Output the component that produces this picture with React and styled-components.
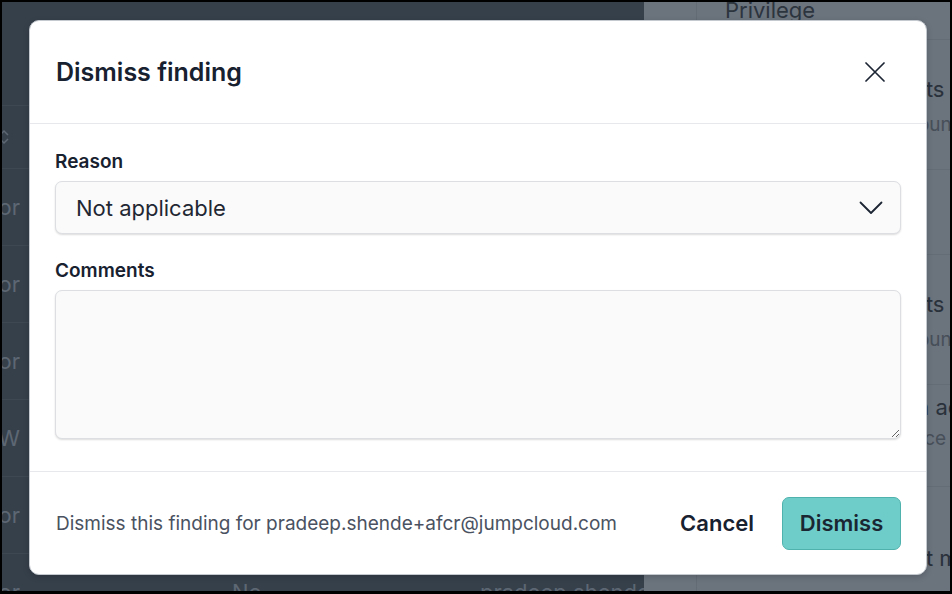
import styled, { createGlobalStyle } from "styled-components";

const GlobalStyle = createGlobalStyle`
  html, body {
    margin: 0;
    padding: 0;
    background: #000;
  }
  body {
    font-family: Inter, "Noto Sans", sans-serif;
    -webkit-font-smoothing: antialiased;
  }
  * {
    box-sizing: border-box;
  }
`;

const leftRows = [
  { name: "Vendor", admin: "No", user: "pradeep.shende" },
  { name: "Vendor", admin: "No", user: "pradeep.shende" },
  { name: "Vendor", admin: "No", user: "pradeep.shende" },
  { name: "Vendor W", admin: "No", user: "pradeep.shende" },
  { name: "Vendor", admin: "No", user: "pradeep.shende" },
  { name: "Vendor", admin: "No", user: "pradeep.shende" },
];

// h = row height, pad = space above the title, shift = extra indent
const rightRows = [
  { h: 130, pad: 36, shift: 10, title: "Local user accounts", sub: "Built-in machine account" },
  { h: 85 },
  { h: 130, pad: 36, shift: 10, title: "Local user accounts", sub: "Built-in machine account" },
  { h: 102, pad: 9, gap: 6, shift: 6, title: "Unrestricted admin access", sub: "Applies on every device" },
  { h: 110, pad: 58, shift: 10, title: "Local user account mapping" },
];

const App = () => {
  return (
    <>
      <GlobalStyle />
      <Frame>
        <TablePane>
          <Toolbar />
          <HeadRow>
            <NameCell>
              <SortIcon viewBox="0 0 12 18">
                <path d="M2 7 L6 3 L10 7" />
                <path d="M2 11 L6 15 L10 11" />
              </SortIcon>
            </NameCell>
          </HeadRow>
          {leftRows.map((row, i) => (
            <Row key={i}>
              <NameCell>
                <span>{row.name}</span>
              </NameCell>
              <Cell />
              <Cell>{row.admin}</Cell>
              <Cell>{row.user}</Cell>
            </Row>
          ))}
        </TablePane>

        <SidePane>
          <SideHead>
            <CheckCol />
            <SideHeadText>Privilege</SideHeadText>
          </SideHead>
          {rightRows.map((row, i) => (
            <SideRow key={i} $h={row.h}>
              <CheckCol />
              <SideCell $shift={row.shift} $pad={row.pad} $gap={row.gap}>
                {row.title && <SideTitle>{row.title}</SideTitle>}
                {row.sub && <SideSub>{row.sub}</SideSub>}
              </SideCell>
            </SideRow>
          ))}
        </SidePane>

        <Overlay>
          <Modal role="dialog" aria-labelledby="dismiss-title">
            <Header>
              <Title id="dismiss-title">Dismiss finding</Title>
              <CloseButton aria-label="Close">
                <svg width="20" height="20" viewBox="0 0 20 20">
                  <path
                    d="M1 1 L19 19 M19 1 L1 19"
                    stroke="#1c2533"
                    strokeWidth="1.7"
                    strokeLinecap="round"
                  />
                </svg>
              </CloseButton>
            </Header>

            <Body>
              <Field>
                <Label>Reason</Label>
                <SelectBox>
                  <span>Not applicable</span>
                  <svg width="24" height="14" viewBox="0 0 24 14">
                    <path
                      d="M1.5 1.5 L12 12 L22.5 1.5"
                      fill="none"
                      stroke="#1c2533"
                      strokeWidth="1.8"
                      strokeLinecap="round"
                      strokeLinejoin="round"
                    />
                  </svg>
                </SelectBox>
              </Field>
              <Field>
                <Label>Comments</Label>
                <TextArea />
              </Field>
            </Body>

            <Footer>
              <FooterNote>
                Dismiss this finding for pradeep.shende+afcr@jumpcloud.com
              </FooterNote>
              <GhostButton>Cancel</GhostButton>
              <PrimaryButton>Dismiss</PrimaryButton>
            </Footer>
          </Modal>
        </Overlay>
      </Frame>
    </>
  );
};

const Frame = styled.div`
  position: relative;
  width: 952px;
  height: 594px;
  border: 2px solid #000;
  border-bottom-width: 3px;
  overflow: hidden;
  display: flex;
`;

/* dimmed table behind the dialog */
const TablePane = styled.div`
  width: 642px;
  flex-shrink: 0;
  background: #36404b;
  display: flex;
  flex-direction: column;
`;

const Toolbar = styled.div`
  height: 103px;
  flex-shrink: 0;
`;

const HeadRow = styled.div`
  height: 63px;
  flex-shrink: 0;
  border-top: 1px solid #3e4853;
  display: flex;
  align-items: center;
`;

const Row = styled.div`
  height: 77px;
  flex-shrink: 0;
  border-top: 1px solid #3e4853;
  display: grid;
  grid-template-columns: 18px 188px 248px 1fr;
  align-items: center;
  color: #5d6773;
  font-size: 22px;
`;

const NameCell = styled.div`
  width: 18px;
  overflow: hidden;
  display: flex;
  justify-content: flex-end;
  white-space: nowrap;
`;

const SortIcon = styled.svg`
  flex-shrink: 0;
  width: 12px;
  height: 18px;
  margin-right: 10px;
  fill: none;
  stroke: #5d6773;
  stroke-width: 1.5;
`;

const Cell = styled.div`
  padding-left: 24px;
  white-space: nowrap;
  overflow: hidden;
`;

const SidePane = styled.div`
  flex: 1;
  background: #6b737d;
  display: flex;
  flex-direction: column;
`;

const SideHead = styled.div`
  height: 38px;
  flex-shrink: 0;
  display: flex;
  border-bottom: 1px solid #646c76;
`;

const CheckCol = styled.div`
  width: 53px;
  flex-shrink: 0;
  border-right: 1px solid #636b75;
`;

const SideHeadText = styled.div`
  padding-left: 28px;
  margin-top: -5px;
  font-size: 22px;
  line-height: 27px;
  color: #2c343e;
`;

const SideRow = styled.div`
  height: ${(p) => p.$h}px;
  flex-shrink: 0;
  display: flex;
  border-bottom: 1px solid #646c76;
`;

const SideCell = styled.div`
  flex: 1;
  padding-left: ${(p) => 28 + (p.$shift || 0)}px;
  padding-top: ${(p) => p.$pad || 0}px;
  display: flex;
  flex-direction: column;
  gap: ${(p) => p.$gap ?? 10}px;
  white-space: nowrap;
  overflow: hidden;
`;

const SideTitle = styled.div`
  font-size: 22px;
  line-height: 27px;
  color: #29313b;
`;

const SideSub = styled.div`
  font-size: 19px;
  line-height: 23px;
  color: #474f59;
`;

/* dialog */
const Overlay = styled.div`
  position: absolute;
  inset: 0;
  display: flex;
  align-items: flex-start;
  justify-content: flex-start;
  padding: 18px 0 0 27px;
`;

const Modal = styled.div`
  width: 898px;
  background: #fff;
  border: 1px solid #c4c9cf;
  border-radius: 10px;
  box-shadow: 0 2px 6px rgba(0, 0, 0, 0.18);
  display: flex;
  flex-direction: column;
  color: #17212f;
`;

const Header = styled.div`
  height: 103px;
  display: flex;
  align-items: center;
  justify-content: space-between;
  padding: 0 33px 0 26px;
  border-bottom: 1px solid #e6e8eb;
`;

const Title = styled.h2`
  margin: 0;
  font-size: 25px;
  line-height: 30px;
  font-weight: 600;
  color: #17212f;
`;

const CloseButton = styled.button`
  width: 36px;
  height: 36px;
  padding: 0;
  border: none;
  background: none;
  display: flex;
  align-items: center;
  justify-content: center;
  cursor: pointer;
`;

const Body = styled.div`
  padding: 26px 25px 32px 25px;
  display: flex;
  flex-direction: column;
  gap: 25px;
`;

const Field = styled.div`
  display: flex;
  flex-direction: column;
  gap: 7px;
`;

const Label = styled.label`
  font-size: 19px;
  line-height: 24px;
  font-weight: 600;
  color: #17212f;
`;

const SelectBox = styled.div`
  height: 53px;
  border: 1px solid #dcdee2;
  border-radius: 7px;
  background: #fafafa;
  box-shadow: 0 1px 2px rgba(0, 0, 0, 0.14);
  display: flex;
  align-items: center;
  justify-content: space-between;
  padding: 0 17px 0 20px;
  font-size: 22px;
  color: #1f2733;
  cursor: pointer;
`;

const TextArea = styled.textarea`
  height: 149px;
  border: 1px solid #dcdee2;
  border-radius: 7px;
  background: #fafafa;
  box-shadow: 0 1px 2px rgba(0, 0, 0, 0.14);
  resize: vertical;
  padding: 12px 20px;
  font: inherit;
  font-size: 20px;
  color: #1f2733;
  outline: none;
`;

const Footer = styled.div`
  height: 103px;
  border-top: 1px solid #e6e8eb;
  display: flex;
  align-items: center;
  padding: 0 25px 0 26px;
`;

const FooterNote = styled.p`
  flex: 1;
  margin: 0;
  font-size: 19px;
  color: #4a5261;
`;

const GhostButton = styled.button`
  height: 53px;
  padding: 0 14px;
  margin-right: 14px;
  border: none;
  background: none;
  font-family: inherit;
  font-size: 22px;
  font-weight: 600;
  color: #17212f;
  cursor: pointer;
`;

const PrimaryButton = styled.button`
  width: 119px;
  height: 53px;
  border: 1px solid #4fb2ad;
  border-radius: 7px;
  background: #6fcdc9;
  font-family: inherit;
  font-size: 22px;
  font-weight: 600;
  color: #1a2733;
  cursor: pointer;
`;

export default App;
